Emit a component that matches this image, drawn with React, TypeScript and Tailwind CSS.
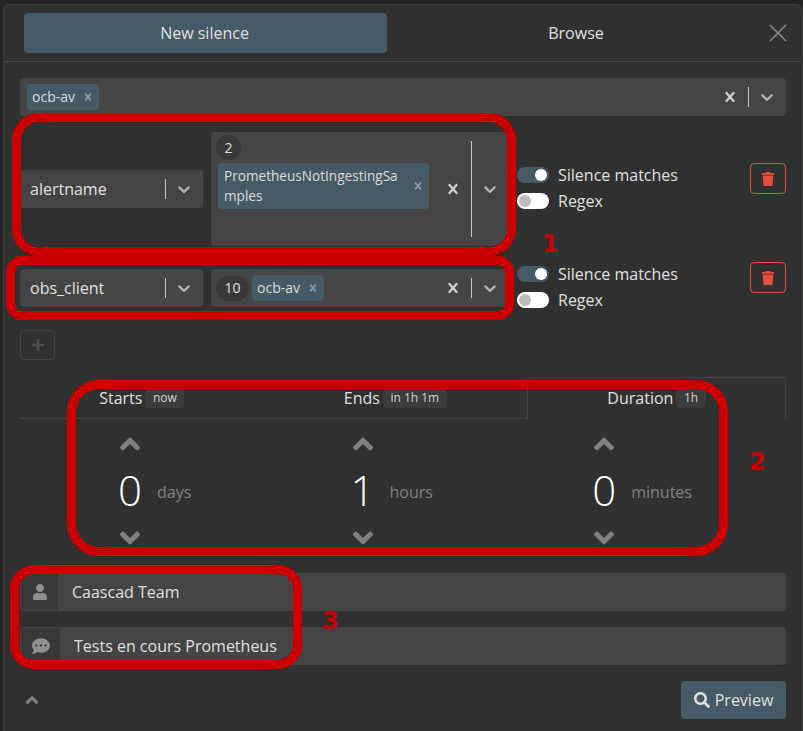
import { FaAngleDown, FaAngleUp, FaCommentDots, FaPlus, FaSearch, FaTrash, FaUser } from "react-icons/fa";

const ChevronIcon = ({ className = "" }: { className?: string }) => (
  <svg viewBox="0 0 20 20" width="20" height="20" fill="currentColor" className={className}>
    <path d="M4.516 7.548c0.436-0.446 1.043-0.481 1.576 0l3.908 3.747 3.908-3.747c0.533-0.481 1.141-0.446 1.574 0 0.436 0.445 0.408 1.197 0 1.615-0.406 0.418-4.695 4.502-4.695 4.502-0.217 0.223-0.502 0.335-0.787 0.335s-0.57-0.112-0.789-0.335c0 0-4.287-4.084-4.695-4.502s-0.436-1.17 0-1.615z" />
  </svg>
);

const CrossIcon = ({ size = 20, className = "" }: { size?: number; className?: string }) => (
  <svg viewBox="0 0 20 20" width={size} height={size} fill="currentColor" className={className}>
    <path d="M14.348 14.849c-0.469 0.469-1.229 0.469-1.697 0l-2.651-3.030-2.651 3.029c-0.469 0.469-1.229 0.469-1.697 0-0.469-0.469-0.469-1.229 0-1.697l2.758-3.15-2.759-3.152c-0.469-0.469-0.469-1.228 0-1.697s1.228-0.469 1.697 0l2.652 3.031 2.651-3.031c0.469-0.469 1.228-0.469 1.697 0s0.469 1.229 0 1.697l-2.758 3.152 2.758 3.15c0.469 0.469 0.469 1.229 0 1.698z" />
  </svg>
);

const Chip = ({ label }: { label: string }) => (
  <span className="flex h-[26px] w-[72px] items-center justify-between rounded bg-[#455a64] pr-[4px] pl-[5px] text-sm text-[#dcdcdc]">
    {label}
    <CrossIcon size={14} className="text-[#8e9ca3]" />
  </span>
);

const Indicators = ({ clear = false, sepClass = "h-5", className = "" }: { clear?: boolean; sepClass?: string; className?: string }) => (
  <div className={`flex shrink-0 items-center text-[#c8c8c8] ${className}`}>
    {clear && <CrossIcon className="mr-[8px] text-[#d0d0d0]" />}
    <span className={`w-px bg-[#c8c8c8] ${sepClass}`} />
    <ChevronIcon className="mr-[9px] ml-[8px] text-[#b4b4b4]" />
  </div>
);

const Toggle = ({ on, label }: { on: boolean; label: string }) => (
  <div className="flex h-[26px] items-center gap-[9px]">
    <span className={`flex h-4 w-8 items-center rounded-full px-[2px] ${on ? "justify-end bg-[#455a64]" : "justify-start bg-white"}`}>
      <span className={`size-3 rounded-full ${on ? "bg-white" : "bg-[#bcbcbc]"}`} />
    </span>
    <span className="text-base text-[#e0e0e0]">{label}</span>
  </div>
);

const DeleteButton = () => (
  <button type="button" className="mb-[21px] ml-auto flex h-[31px] w-9 items-center justify-center rounded-sm border border-[#e74c3c] text-[#e74c3c]">
    <FaTrash size={14} />
  </button>
);

const NameSelect = ({ name }: { name: string }) => (
  <div className="flex h-[38px] w-[183px] shrink-0 items-center justify-between rounded bg-[#444444] pl-[10px] text-base text-[#e0e0e0]">
    {name}
    <Indicators />
  </div>
);

const Tab = ({ label, badge, active = false }: { label: string; badge: string; active?: boolean }) => (
  <div
    className={`flex h-[42px] items-center justify-center gap-[3px] border-[#444444] ${
      active ? "w-[259px] rounded-t border-x border-t pb-[1px]" : "w-[253.5px] border-b pr-[10px]"
    }`}
  >
    <span className="text-base text-[#e0e0e0]">{label}</span>
    <span className="rounded bg-[#3c3c3c] px-[7.5px] py-[2px] text-xs text-[#d4d4d4]">{badge}</span>
  </div>
);

const Picker = ({ value, unit }: { value: string; unit: string }) => (
  <div className="flex items-center gap-[7px]">
    <div className="flex w-10 flex-col items-center text-[#808080]">
      <FaAngleUp size={32} />
      <span className="mt-[2px] mb-[4px] text-[42px] leading-[56px] font-light text-white">{value}</span>
      <FaAngleDown size={32} />
    </div>
    <span className="mt-[1px] text-base text-[#808080]">{unit}</span>
  </div>
);

const Note = ({ icon, text, iconClass, textClass }: { icon: React.ReactNode; text: string; iconClass: string; textClass: string }) => (
  <div className="flex h-[38px] items-center overflow-hidden rounded bg-[#444444] text-base text-[#e0e0e0]">
    <span className={`flex h-full items-center justify-center rounded-l border border-[#444444] bg-[#383838] text-[#909090] ${iconClass}`}>{icon}</span>
    <span className={textClass}>{text}</span>
  </div>
);

export default function App() {
  return (
    <div className="relative h-[731px] w-[803px] overflow-hidden bg-[#242424] pt-[4px] pl-[3px] font-['Open_Sans',sans-serif]">
      <div className="h-[740px] w-[799px] rounded-t-md border border-[#3e3e3e] bg-[#303030]">
        {/* Header */}
        <div className="flex h-[57px] items-start border-b border-[#464646] pt-[8px] pl-[20px]">
          <div className="flex h-10 w-[363px] items-center justify-center rounded bg-[#455a64] pr-[2px] text-base text-[#e0e0e0]">New silence</div>
          <div className="flex h-10 w-[378px] items-center justify-center text-base text-[#e0e0e0]">Browse</div>
          <svg viewBox="0 0 18 18" width="18" height="18" className="mt-[11px] ml-[4px] text-[#888888]" stroke="currentColor" strokeWidth="1.6">
            <path d="M1 1l16 16M17 1L1 17" />
          </svg>
        </div>

        <div className="w-[782px] pt-4 pl-4">
          {/* Filter */}
          <div className="flex h-[38px] w-[766px] items-center justify-between rounded bg-[#444444] pl-[7px]">
            <Chip label="ocb-av" />
            <Indicators clear />
          </div>

          {/* Matcher 1 */}
          <div className="mt-4 flex h-[114px] w-[766px] items-center">
            <NameSelect name="alertname" />
            <div className="ml-2 flex h-full w-[296px] shrink-0 rounded bg-[#444444]">
              <div className="grow pt-[3px] pl-[5px]">
                <span className="flex size-[25px] items-center justify-center rounded-full bg-[#383838] text-sm text-[#e0e0e0]">2</span>
                <div className="mt-[3px] ml-[2px] flex h-[46px] w-[211px] items-center justify-between rounded bg-[#455a64] pr-[4px] pl-[6px] text-[13.6px] leading-5 text-[#dcdcdc]">
                  <span className="w-[176px] break-all">PrometheusNotIngestingSamples</span>
                  <CrossIcon size={14} className="text-[#8e9ca3]" />
                </div>
              </div>
              <div className="flex items-center">
                <Indicators clear sepClass="h-[96px]" className="-mr-[2px]" />
              </div>
            </div>
            <div className="mb-[2px] ml-[10px] flex flex-col">
              <Toggle on label="Silence matches" />
              <Toggle on={false} label="Regex" />
            </div>
            <DeleteButton />
          </div>

          {/* Matcher 2 */}
          <div className="mt-[23px] flex h-[38px] w-[766px] items-center">
            <NameSelect name="obs_client" />
            <div className="ml-2 flex h-full w-[296px] shrink-0 items-center justify-between rounded bg-[#444444] pl-[5px]">
              <div className="flex items-center gap-[3px]">
                <span className="flex h-[25px] w-[33px] items-center justify-center rounded-full bg-[#383838] text-sm text-[#e0e0e0]">10</span>
                <Chip label="ocb-av" />
              </div>
              <Indicators clear className="-mr-[2px]" />
            </div>
            <div className="mb-[2px] ml-[10px] flex flex-col">
              <Toggle on label="Silence matches" />
              <Toggle on={false} label="Regex" />
            </div>
            <DeleteButton />
          </div>

          <button type="button" className="mt-[23px] flex h-[30px] w-[35px] items-center justify-center rounded-sm border border-[#444444] text-[#4c4c4c]">
            <FaPlus size={14} />
          </button>

          {/* Time tabs */}
          <div className="mt-[17px] flex w-[766px]">
            <Tab label="Starts" badge="now" />
            <Tab label="Ends" badge="in 1h 1m" />
            <Tab label="Duration" badge="1h" active />
          </div>

          <div className="mt-[9px] flex w-[766px] justify-between pr-[94px] pl-[90px]">
            <Picker value="0" unit="days" />
            <Picker value="1" unit="hours" />
            <Picker value="0" unit="minutes" />
          </div>

          {/* Author and comment */}
          <div className="mt-[19px] flex w-[766px] flex-col gap-4">
            <Note icon={<FaUser size={16} />} text="Caascad Team" iconClass="w-[39px]" textClass="pl-[13px]" />
            <Note icon={<FaCommentDots size={18} />} text="Tests en cours Prometheus" iconClass="w-[41px]" textClass="pl-[13px]" />
          </div>

          <div className="mt-4 flex w-[766px] items-center justify-between">
            <FaAngleUp size={20} className="ml-[2px] text-[#808080]" />
            <button type="button" className="flex h-[38px] w-[105px] items-center justify-center gap-[5px] rounded bg-[#455a64] text-base text-[#e0e0e0]">
              <FaSearch size={16} />
              Preview
            </button>
          </div>
        </div>
      </div>

      {/* Red annotations drawn over the screenshot */}
      <div className="absolute top-[113px] left-[12px] h-[143px] w-[504px] rounded-[27px] border-[9px] border-[#cc0000]" />
      <div className="absolute top-[256px] left-[6px] h-[64px] w-[508px] rounded-[16px] border-[9px] border-[#cc0000]" />
      <div className="absolute top-[380px] left-[67px] h-[176px] w-[661px] rounded-[32px] border-[9px] border-[#cc0000]" />
      <div className="absolute top-[565px] left-[10px] h-[104px] w-[292px] rounded-[24px] border-[9px] border-[#cc0000]" />
      <span className="absolute top-[228px] left-[542px] font-['DejaVu_Sans',sans-serif] text-[24px] leading-8 font-bold text-[#cc0000]">1</span>
      <span className="absolute top-[446px] left-[749px] font-['DejaVu_Sans',sans-serif] text-[24px] leading-8 font-bold text-[#cc0000]">2</span>
      <span className="absolute top-[605px] left-[322px] font-['DejaVu_Sans',sans-serif] text-[24px] leading-8 font-bold text-[#cc0000]">3</span>
    </div>
  );
}
